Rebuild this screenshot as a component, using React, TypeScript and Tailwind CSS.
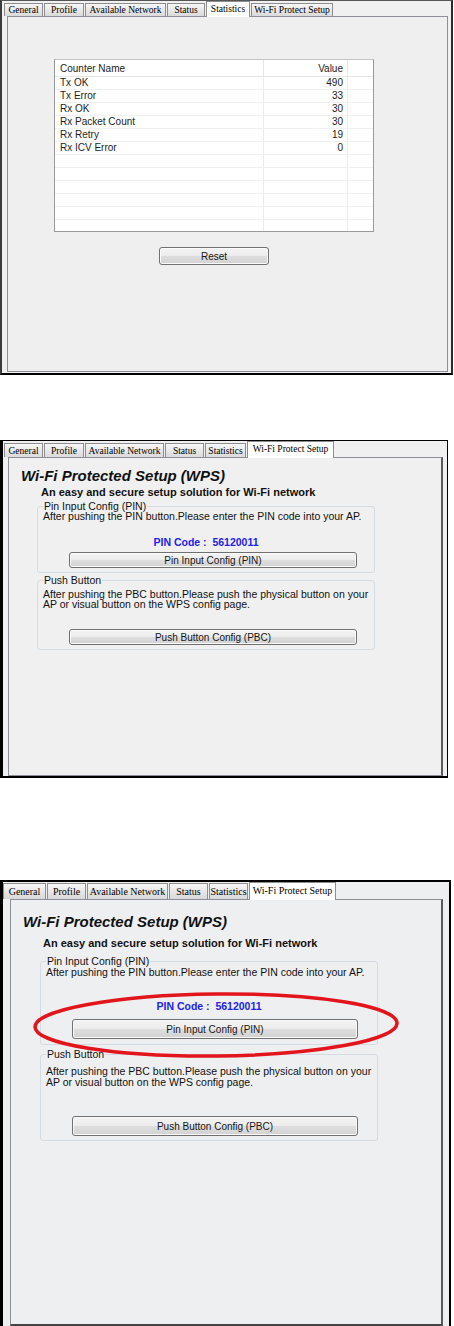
import React from "react";

const TAB_NAMES = ["General", "Profile", "Available Network", "Status", "Statistics", "Wi-Fi Protect Setup"];

function Tabs({
  widths,
  active,
  inactiveCls,
  activeCls,
}: {
  widths: number[];
  active: number;
  inactiveCls: string;
  activeCls: string;
}) {
  return (
    <div className="relative z-10 flex items-end">
      {TAB_NAMES.map((n, i) => (
        <div
          key={n}
          style={{ width: widths[i] }}
          className={`${i > 0 ? "ml-[1px]" : ""} flex shrink-0 items-center justify-center overflow-hidden whitespace-nowrap font-['Liberation_Serif',serif] text-black ${
            i === active ? activeCls : inactiveCls
          }`}
        >
          {n}
        </div>
      ))}
    </div>
  );
}

const btnCls =
  "flex items-center justify-center rounded-[3px] border border-[#707070] bg-[linear-gradient(to_bottom,#f4f4f4_0%,#ececec_48%,#dedede_52%,#d2d2d2_100%)] shadow-[inset_0_0_0_1px_#fbfbfb] text-[#151515]";

const rows: [string, string][] = [
  ["Tx OK", "490"],
  ["Tx Error", "33"],
  ["Rx OK", "30"],
  ["Rx Packet Count", "30"],
  ["Rx Retry", "19"],
  ["Rx ICV Error", "0"],
  ["", ""],
  ["", ""],
  ["", ""],
  ["", ""],
  ["", ""],
  ["", ""],
];

function StatisticsFrame() {
  return (
    <div className="flex h-[375px] w-[453px] shrink-0 flex-col border-t border-r-2 border-b-2 border-l-2 border-t-[#555] border-r-[#2a2a2a] border-b-black border-l-[#3c3c3c] bg-[#f0f0f0]">
      <div className="pl-[2px]">
        <Tabs
          widths={[39, 40, 81, 38, 44, 82]}
          active={4}
          inactiveCls="h-[13px] border border-b-0 border-[#8e8e8e] bg-[linear-gradient(to_bottom,#f7f7f7,#dadada)] text-[9.5px] leading-[10px]"
          activeCls="h-[16px] mb-[-1px] border border-b-0 border-[#8e8e8e] bg-white text-[9.5px] leading-[10px] pb-[2px]"
        />
      </div>
      <div className="mb-[1px] ml-[5px] mr-[3px] flex-1 border border-[#8c8f96] bg-[#efefef] pl-[46px] pt-[42px]">
        <div className="flex w-fit flex-col items-center">
          <div className="flex h-[173px] w-[320px] flex-col overflow-hidden border border-[#9a9a9a] border-t-[#c4c4c4] bg-white text-[10px] text-[#1d1d1d]">
            <div className="flex h-[17px] shrink-0 border-b border-[#e6e6e6]">
              <div className="flex w-[209px] items-center border-r border-[#e6e6e6] pl-[5px]">Counter Name</div>
              <div className="flex w-[84px] items-center justify-end border-r border-[#e6e6e6] pr-[4px]">Value</div>
              <div className="flex-1" />
            </div>
            {rows.map((r, i) => (
              <div key={i} className="flex h-[13px] shrink-0 border-b border-[#f0f0f0] leading-[12px]">
                <div className="flex w-[209px] items-center border-r border-[#ececec] pl-[5px]">{r[0]}</div>
                <div className="flex w-[84px] items-center justify-end border-r border-[#ececec] pr-[4px]">{r[1]}</div>
                <div className="flex-1" />
              </div>
            ))}
          </div>
          <button className={`${btnCls} mt-[15px] h-[18px] w-[110px] text-[10px]`}>Reset</button>
        </div>
      </div>
    </div>
  );
}

function WpsFrame2() {
  return (
    <div className="flex h-[338px] w-[448px] shrink-0 flex-col border-t border-r border-b-2 border-l-[3px] border-black bg-[#f0f0f0]">
      <div className="pl-[1px]">
        <Tabs
          widths={[39, 40, 79, 39, 41, 87]}
          active={5}
          inactiveCls="h-[14px] border border-b-0 border-[#8e8e8e] bg-[linear-gradient(to_bottom,#f7f7f7,#dadada)] text-[9.5px] leading-[10px]"
          activeCls="h-[17px] mb-[-1px] border border-b-0 border-[#8e8e8e] bg-white text-[9.5px] leading-[10px] pb-[3px]"
        />
      </div>
      <div className="ml-[5px] mr-[4px] flex-1 border border-r-2 border-[#8c8f96] border-r-[#5a5a5a] bg-[#f0f0f0] text-[#111]">
        <div className="pl-[12px] pt-[9px] text-[15px] font-bold italic leading-[18px]">Wi-Fi Protected Setup (WPS)</div>
        <div className="pl-[32px] text-[11px] font-bold leading-[14px]">An easy and secure setup solution for Wi-Fi network</div>
        <fieldset className="ml-[28px] mt-[2px] w-[338px] rounded-[3px] border border-[#d3dce2] pb-[4px] pl-[5px] pr-[5px]">
          <legend className="px-[1px] text-[10.5px] leading-[10px]">Pin Input Config (PIN)</legend>
          <div className="whitespace-nowrap text-[10.5px] leading-[10px]">
            After pushing the PIN button.Please enter the PIN code into your AP.
          </div>
          <div className="mt-[15px] text-center text-[10.5px] font-bold leading-[12px] text-[#2222ee]">PIN Code :&nbsp; 56120011</div>
          <button className={`${btnCls} ml-[26px] mt-[4px] h-[16px] w-[288px] text-[10px]`}>Pin Input Config (PIN)</button>
        </fieldset>
        <fieldset className="ml-[28px] mt-[2px] w-[338px] rounded-[3px] border border-[#d3dce2] pb-[4px] pl-[5px] pr-[5px]">
          <legend className="px-[1px] text-[10.5px] leading-[10px]">Push Button</legend>
          <div className="mt-[4px] whitespace-nowrap text-[10.5px] leading-[10px]">
            After pushing the PBC button.Please push the physical button on your
            <br />
            AP or visual button on the WPS config page.
          </div>
          <button className={`${btnCls} ml-[26px] mt-[20px] h-[16px] w-[288px] text-[10px]`}>Push Button Config (PBC)</button>
        </fieldset>
      </div>
    </div>
  );
}

function WpsFrame3() {
  return (
    <div className="relative flex h-[446px] w-[451px] shrink-0 flex-col border-t-2 border-r-2 border-l-[3px] border-black bg-[#eeeff1]">
      <div>
        <Tabs
          widths={[43, 39, 81, 39, 39, 87]}
          active={5}
          inactiveCls="h-[16px] border border-b-0 border-[#8e8e8e] bg-[linear-gradient(to_bottom,#f7f7f7,#d8d8d8)] text-[10px] leading-[11px]"
          activeCls="h-[18px] mb-[-1px] border border-b-0 border-[#8e8e8e] bg-white text-[10px] leading-[11px] pb-[3px]"
        />
      </div>
      <div className="ml-[7px] mr-[6px] flex-1 border border-r-2 border-b-2 border-[#8c8f96] border-r-[#5a5a5a] border-b-[#444] bg-[#eeeff1] text-[#111]">
        <div className="pl-[12px] pt-[13px] text-[15px] font-bold italic leading-[18px]">Wi-Fi Protected Setup (WPS)</div>
        <div className="mt-[5px] pl-[32px] text-[11px] font-bold leading-[14px]">An easy and secure setup solution for Wi-Fi network</div>
        <fieldset className="ml-[29px] mt-[6px] w-[338px] rounded-[3px] border border-[#d3dce2] pb-[5px] pl-[5px] pr-[5px]">
          <legend className="px-[1px] text-[10.5px] leading-[11px]">Pin Input Config (PIN)</legend>
          <div className="whitespace-nowrap text-[10.5px] leading-[11px]">
            After pushing the PIN button.Please enter the PIN code into your AP.
          </div>
          <div className="mt-[22px] text-center text-[10.5px] font-bold leading-[13px] text-[#2222ee]">PIN Code :&nbsp; 56120011</div>
          <button className={`${btnCls} ml-[26px] mt-[6px] h-[20px] w-[286px] text-[10px]`}>Pin Input Config (PIN)</button>
        </fieldset>
        <fieldset className="ml-[29px] mt-[4px] w-[338px] rounded-[3px] border border-[#d3dce2] pb-[4px] pl-[5px] pr-[5px]">
          <legend className="px-[1px] text-[10.5px] leading-[11px]">Push Button</legend>
          <div className="mt-[6px] whitespace-nowrap text-[10.5px] leading-[11px]">
            After pushing the PBC button.Please push the physical button on your
            <br />
            AP or visual button on the WPS config page.
          </div>
          <button className={`${btnCls} ml-[26px] mt-[28px] h-[20px] w-[286px] text-[10px]`}>Push Button Config (PBC)</button>
        </fieldset>
      </div>
      <svg className="absolute left-[30px] top-[110px] h-[66px] w-[366px]" viewBox="0 0 366 66" fill="none">
        <ellipse cx="183" cy="33" rx="181" ry="31" stroke="#e3151c" strokeWidth="3.5" transform="rotate(-0.6 183 33)" />
      </svg>
    </div>
  );
}

export default function App() {
  return (
    <div className="flex h-[1326px] w-[454px] flex-col overflow-hidden bg-white font-['Liberation_Sans',Arial,sans-serif]">
      <StatisticsFrame />
      <div className="mt-[65px]">
        <WpsFrame2 />
      </div>
      <div className="mt-[102px]">
        <WpsFrame3 />
      </div>
    </div>
  );
}
